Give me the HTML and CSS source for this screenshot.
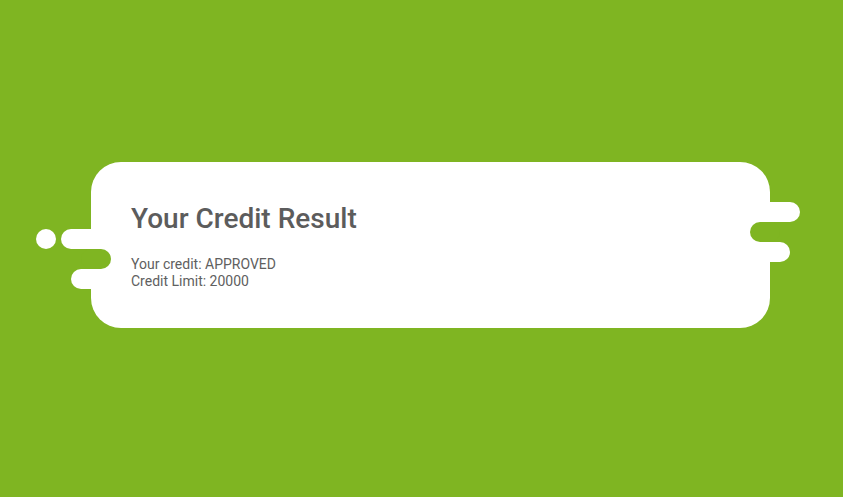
FILE: index.html
```html
<!DOCTYPE html>
<html>
<head>
<meta charset="utf-8">
<link rel="stylesheet" href="styles.css">
</head>
<body>
<div class="page">
  <div class="card">
    <span class="deco dot"></span>
    <span class="deco pill l1"></span>
    <span class="deco notch ln"></span>
    <span class="deco pill l2"></span>
    <span class="deco pill r1"></span>
    <span class="deco notch rn"></span>
    <span class="deco pill r2"></span>
    <h1 class="title">Your Credit Result</h1>
    <p class="line">Your credit: APPROVED</p>
    <p class="line">Credit Limit: 20000</p>
  </div>
</div>
</body>
</html>
```
FILE: styles.css
```css
html, body {
  margin: 0;
  padding: 0;
  background: #7fb522;
}
.page {
  width: 843px;
  height: 497px;
  padding: 162px 0 0 91px;
  box-sizing: border-box;
  font-family: Roboto, "Liberation Sans", sans-serif;
}
.card {
  position: relative;
  width: 679px;
  height: 166px;
  box-sizing: border-box;
  background: #fff;
  border-radius: 30px;
  padding: 40px 40px 0 40px;
}
.deco {
  position: absolute;
  height: 20px;
  border-radius: 10px;
}
.dot { left: -55px; top: 67px; width: 20px; background: #fff; }
.pill { background: #fff; }
.notch { background: #7fb522; }
.l1 { left: -30px; top: 67px; width: 40px; }
.ln { left: -10px; top: 87px; width: 30px; }
.l2 { left: -20px; top: 107px; width: 40px; }
.r1 { left: 669px; top: 40px; width: 40px; }
.rn { left: 659px; top: 60px; width: 30px; }
.r2 { left: 669px; top: 80px; width: 30px; }
.title {
  margin: 0 0 21px 0;
  font-size: 28px;
  line-height: 33px;
  font-weight: 500;
  color: #5c5c5c;
}
.line {
  margin: 0;
  font-size: 14px;
  line-height: 17px;
  color: #606060;
}
```
